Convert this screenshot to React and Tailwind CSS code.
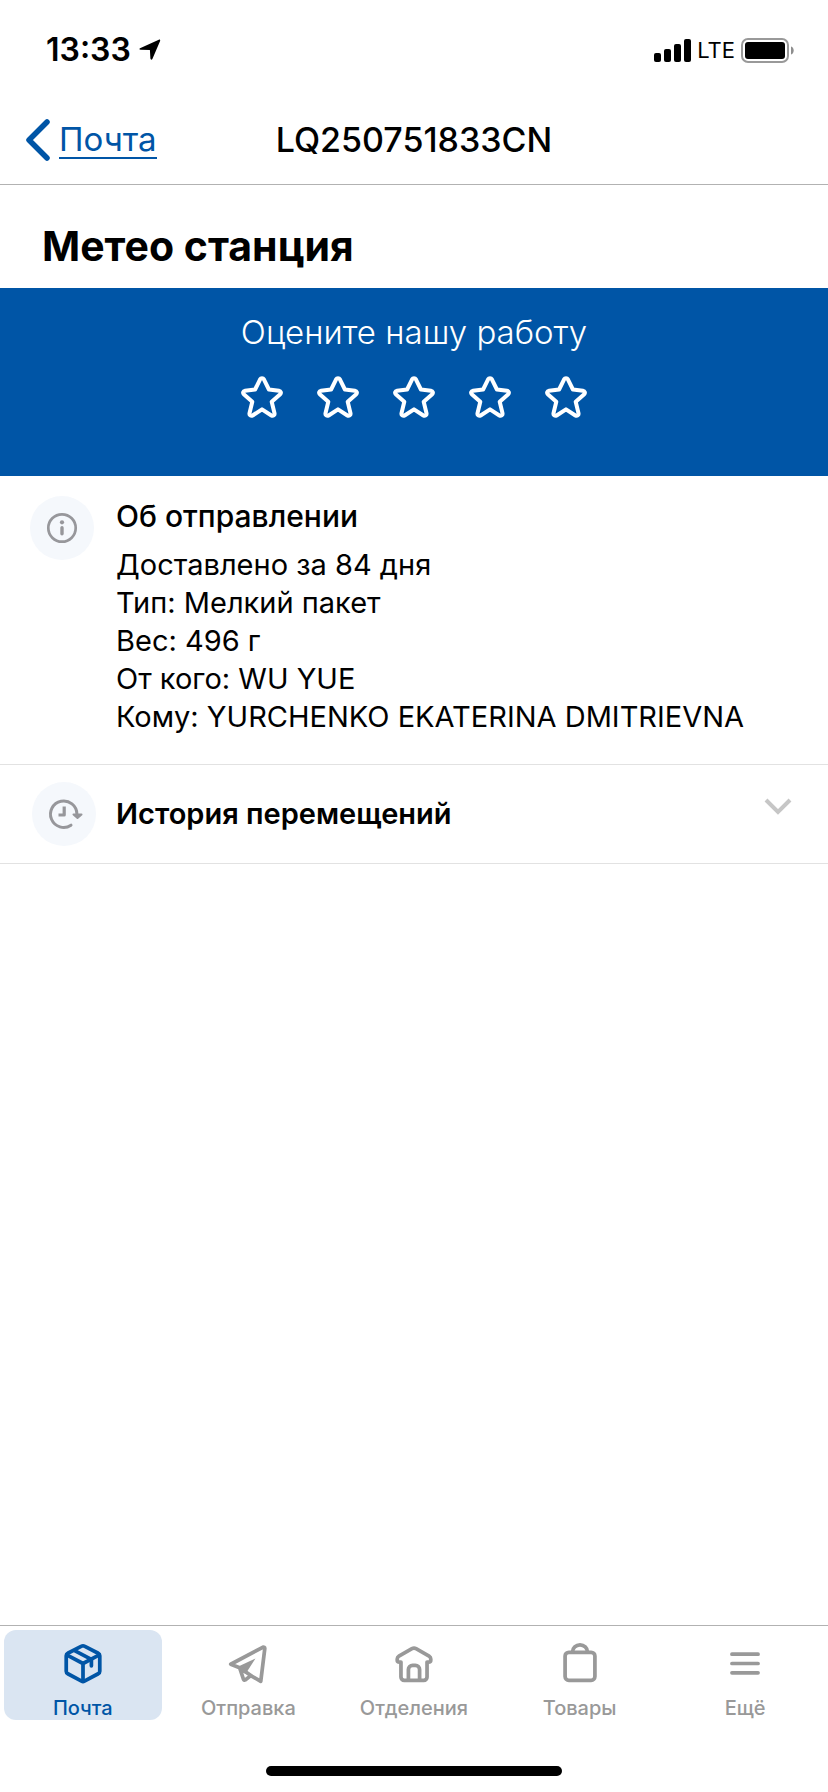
// App.jsx
// Parcel tracking — shipment details screen

import { useState } from "react";
import clsx from "clsx";

const DETAILS = [
  "Доставлено за 84 дня",
  "Тип: Мелкий пакет",
  "Вес: 496 г",
  "От кого: WU YUE",
  "Кому: YURCHENKO EKATERINA DMITRIEVNA",
];

const TABS = [
  { label: "Почта", icon: BoxIcon },
  { label: "Отправка", icon: PlaneIcon },
  { label: "Отделения", icon: HouseIcon },
  { label: "Товары", icon: BagIcon },
  { label: "Ещё", icon: MenuIcon },
];

function BoxIcon() {
  return (
    <svg width="44" height="44" viewBox="0 0 44 44" fill="none" stroke="currentColor" strokeWidth="4" strokeLinecap="round" strokeLinejoin="round">
      <path d="M20.5 3.400a3 3 0 0 1 3 0L38.300 11a3 3 0 0 1 1.700 2.700v16.600a3 3 0 0 1-1.700 2.700l-14.800 8a3 3 0 0 1-3 0L5.700 33a3 3 0 0 1-1.700-2.700V13.700A3 3 0 0 1 5.700 11z" />
      <path d="M5 13l17 9 17-9M22 22v18" />
      <path d="M13.500 8.500L31 17.500v7" />
    </svg>
  );
}

function PlaneIcon() {
  return (
    <svg width="44" height="44" viewBox="0 0 44 44" fill="none" stroke="currentColor" strokeWidth="4" strokeLinecap="round" strokeLinejoin="round">
      <path d="M37.800 4.600L3.500 22.800l9.500 3.700 4.200 12.700c.3.900 1.100 1 1.800.4l6-4.600 10.700 6.200L40 6.200c.2-1.500-1-2.200-2.200-1.600z" />
      <path d="M30 16.500L11 25.500l4 6 4.500 1.500z" fill="currentColor" stroke="none" />
      <path d="M14 27l11 8" />
    </svg>
  );
}

function HouseIcon() {
  return (
    <svg width="44" height="44" viewBox="0 0 44 44" fill="none" stroke="currentColor" strokeWidth="4" strokeLinecap="round" strokeLinejoin="round">
      <path d="M8 20.500H6.500C4.500 20.500 4 20 4 18.500v-1.200c0-1.400.6-2.400 1.800-3.100l14-8.100a4.500 4.500 0 0 1 4.400 0l14 8.100c1.200.7 1.800 1.700 1.800 3.100v1.200c0 1.500-.5 2-2.500 2H36v16a3.500 3.500 0 0 1-3.500 3.500h-21A3.500 3.500 0 0 1 8 36.500z" />
      <path d="M16 39V28.500a4.500 4.500 0 0 1 4.500-4.500h3a4.500 4.500 0 0 1 4.500 4.500V39" />
    </svg>
  );
}

function BagIcon() {
  return (
    <svg width="44" height="44" viewBox="0 0 44 44" fill="none" stroke="currentColor" strokeWidth="4" strokeLinecap="round" strokeLinejoin="round">
      <rect x="6" y="10" width="32" height="30" rx="4" />
      <path d="M14 9.500a8 7.500 0 0 1 16 0" />
    </svg>
  );
}

function MenuIcon() {
  return (
    <svg width="44" height="44" viewBox="0 0 44 44" fill="none" stroke="currentColor" strokeWidth="4" strokeLinecap="round">
      <path d="M8 12h28M8 22h28M8 32h28" />
    </svg>
  );
}

function StarIcon({ filled }) {
  return (
    <svg width="42" height="42" viewBox="0 0 42 42" fill={filled ? "currentColor" : "none"} stroke="currentColor" strokeWidth="4" strokeLinejoin="round">
      <path d="M19.100 3.300c.8-1.500 3-1.500 3.800 0l5 10.200 10.100 1.200c1.900.3 2.500 2.300 1.200 3.500l-8.500 7.600 2.800 11.500c.4 1.900-1.500 3.100-3.100 2.200L21 33.300l-9.400 6.200c-1.600.9-3.500-.3-3.100-2.200l2.800-11.500-8.500-7.600c-1.300-1.200-.7-3.200 1.200-3.500l10.100-1.200z" />
    </svg>
  );
}

function InfoIcon() {
  return (
    <svg width="32" height="32" viewBox="0 0 32 32" fill="none" stroke="currentColor" strokeWidth="2.700">
      <circle cx="16" cy="16" r="13.700" />
      <circle cx="16" cy="10.300" r="2.100" fill="currentColor" stroke="none" />
      <path d="M16 15.800v6" strokeWidth="3.400" strokeLinecap="round" />
    </svg>
  );
}

function HistoryIcon() {
  return (
    <svg className="overflow-visible" width="32" height="32" viewBox="0 0 32 32" fill="none" stroke="currentColor" strokeWidth="3" strokeLinecap="round" strokeLinejoin="round">
      <path d="M23 27.200A13.200 13.200 0 1 1 28.900 16" />
      <path d="M25.500 16.500h8L29.500 20z" fill="currentColor" strokeWidth="2" />
      <path d="M16.200 8.500V17H10.500" strokeWidth="3.200" strokeLinecap="butt" />
    </svg>
  );
}

function StatusBar() {
  return (
    <div className="flex h-24 items-center justify-between pl-[46px] pr-[34px] pt-1">
      <div className="flex items-center gap-2">
        <span className="text-[32px] font-semibold leading-9">13:33</span>
        <svg width="22" height="22" viewBox="0 0 22 22" fill="currentColor">
          <path d="M1 9.300L19.800.7c1-.4 1.700.3 1.300 1.300L13.500 19.800c-.5 1.200-2 1.100-2.100-.2l-.5-8.500-9.300-.3c-1.300 0-1.600-1.100-.6-1.500z" />
        </svg>
      </div>
      <div className="flex items-center gap-[6px]">
        <svg width="37" height="24" viewBox="0 0 37 24" fill="currentColor">
          <rect x="0" y="15" width="7" height="9" rx="2" />
          <rect x="10" y="11" width="7" height="13" rx="2" />
          <rect x="20" y="6" width="7" height="18" rx="2" />
          <rect x="30" y="1" width="7" height="23" rx="2" />
        </svg>
        <span className="text-[22px] leading-8">LTE</span>
        <svg width="53" height="25" viewBox="0 0 53 25">
          <rect x="1" y="1" width="46" height="23" rx="6" fill="none" stroke="#999999" strokeWidth="2" />
          <rect x="4" y="4" width="40" height="17" rx="3" fill="#000000" />
          <path d="M50 8.500c3.600 1 3.600 7 0 8z" fill="#8e8e8e" />
        </svg>
      </div>
    </div>
  );
}

function IconCircle({ children }) {
  return (
    <span className="flex size-16 shrink-0 items-center justify-center rounded-full bg-[#f5f8fc] text-[#97979b]">
      {children}
    </span>
  );
}

export default function App() {
  const [rating, setRating] = useState(0);
  const [open, setOpen] = useState(false);
  const [tab, setTab] = useState("Почта");

  return (
    <div className="flex min-h-screen flex-col bg-white font-['Inter','Liberation_Sans',sans-serif] text-black">
      <StatusBar />

      {/* Navigation bar */}
      <header className="grid grid-cols-[1fr_auto_1fr] items-center border-b border-[#b2b2b2] px-6 py-5">
        <a href="#mail" className="flex items-center gap-2 text-[#0055a6]">
          <svg width="27" height="44" viewBox="0 0 27 44" fill="none" stroke="currentColor" strokeWidth="5.500" strokeLinecap="round" strokeLinejoin="round">
            <path d="M23 4L5 22l18 18" />
          </svg>
          <span className="border-b-2 border-[#0055a6] text-[33px] leading-9">Почта</span>
        </a>
        <h1 className="text-[34px] font-medium leading-12">LQ250751833CN</h1>
      </header>

      <main className="grow">
        <h2 className="px-[42px] pb-[17px] pt-9 text-[41px] font-bold leading-[50px]">Метео станция</h2>

        {/* Rating */}
        <section className="flex flex-col items-center bg-[#0055a6] pb-[58px] pt-6 text-white">
          <p className="text-[33px] font-light leading-10">Оцените нашу работу</p>
          <div className="mt-6 flex gap-[34px]">
            {[1, 2, 3, 4, 5].map((n) => (
              <button key={n} type="button" aria-label={`Оценка ${n}`} onClick={() => setRating(n)}>
                <StarIcon filled={n <= rating} />
              </button>
            ))}
          </div>
        </section>

        {/* Shipment info */}
        <section className="flex gap-[22px] border-b border-[#e2e2e2] px-[30px] pb-7 pt-5">
          <IconCircle>
            <InfoIcon />
          </IconCircle>
          <div>
            <h3 className="mb-[10px] text-[30px] font-medium leading-10">Об отправлении</h3>
            {DETAILS.map((line) => (
              <p key={line} className="text-[29px] leading-[38px]">{line}</p>
            ))}
          </div>
        </section>

        {/* Movement history */}
        <section className="border-b border-[#e2e2e2]">
          <button
            type="button"
            aria-expanded={open}
            onClick={() => setOpen(!open)}
            className="flex w-full items-center gap-5 px-8 py-[17px] text-left"
          >
            <IconCircle>
              <HistoryIcon />
            </IconCircle>
            <span className="grow text-[29px] font-semibold leading-10">История перемещений</span>
            <svg className={clsx("mr-1 mt-4 self-start", open && "rotate-180")} width="28" height="18" viewBox="0 0 28 18" fill="none" stroke="#c6c6c6" strokeWidth="4">
              <path d="M2 2l12 12L26 2" />
            </svg>
          </button>
        </section>
      </main>

      {/* Tab bar */}
      <nav className="flex border-t border-[#b2b2b2] pt-1">
        {TABS.map(({ label, icon: Icon }) => (
          <div key={label} className="flex-1 px-1">
            <button
              type="button"
              onClick={() => setTab(label)}
              className={clsx(
                "flex h-[90px] w-full flex-col items-center rounded-xl pt-[13px]",
                tab === label ? "bg-[#dae5f2] text-[#0055a6]" : "text-[#999999]"
              )}
            >
              <Icon />
              <span className="mt-3 text-xl font-medium leading-6">{label}</span>
            </button>
          </div>
        ))}
      </nav>
      <div className="flex justify-center pb-4 pt-[46px]">
        <div className="h-[10px] w-[296px] rounded-full bg-black" />
      </div>
    </div>
  );
}
